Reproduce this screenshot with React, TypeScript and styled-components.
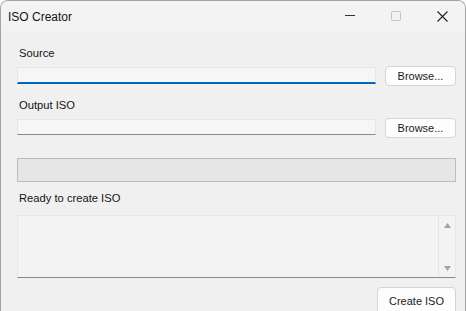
import React from 'react';
import styled, { createGlobalStyle } from 'styled-components';

const GlobalStyle = createGlobalStyle`
  html, body {
    margin: 0;
    padding: 0;
    background: #ffffff;
  }
  * {
    box-sizing: border-box;
  }
`;

const Window = styled.div`
  width: 466px;
  height: 311px;
  overflow: hidden;
  display: flex;
  flex-direction: column;
  background: #f0f0f0;
  border: 1px solid #a3a3a3;
  border-bottom: none;
  border-radius: 8px 8px 0 0;
  font-family: 'Liberation Sans', Arial, sans-serif;
  color: #141414;
`;

const TitleBar = styled.div`
  height: 30px;
  flex: none;
  display: flex;
  align-items: center;
  background: #f3f3f3;
`;

const Title = styled.div`
  flex: 1;
  padding-left: 7px;
  font-size: 12px;
  line-height: 14px;
  margin-top: 1px;
`;

const CaptionButton = styled.div`
  width: 46px;
  height: 30px;
  display: flex;
  align-items: center;
  justify-content: center;
`;

const Body = styled.div`
  flex: 1;
  display: flex;
  flex-direction: column;
  padding: 16px 9px 0 16px;
`;

const Label = styled.div<{ $gap?: number }>`
  font-size: 11.2px;
  line-height: 13px;
  margin-top: ${(p) => p.$gap ?? 0}px;
  margin-left: 2px;
`;

const Row = styled.div`
  display: flex;
  align-items: flex-start;
  gap: 9px;
  margin-top: 6px;
`;

const TextBox = styled.div<{ $focused?: boolean }>`
  flex: 1;
  height: ${(p) => (p.$focused ? 17 : 16)}px;
  margin-top: 1px;
  background: #f6f6f6;
  border: 1px solid #e6e6e6;
  border-bottom: ${(p) => (p.$focused ? '2px solid #0067c0' : '1px solid #8a8a8a')};
`;

const Button = styled.div<{ $width: number; $height?: number }>`
  width: ${(p) => p.$width}px;
  height: ${(p) => p.$height ?? 20}px;
  flex: none;
  display: flex;
  align-items: center;
  justify-content: center;
  background: #fdfdfd;
  border: 1px solid #d4d4d4;
  border-radius: 4px;
  font-size: 11px;
  color: #1b1b1b;
`;

const Progress = styled.div`
  height: 24px;
  margin-top: 20px;
  background: #e6e6e6;
  border: 1px solid #bcbcbc;
`;

const Memo = styled.div`
  height: 63px;
  margin-top: 10px;
  display: flex;
  background: #f3f3f3;
  border: 1px solid #e6e6e6;
  border-bottom: 1px solid #8a8a8a;
`;

const MemoText = styled.div`
  flex: 1;
`;

const ScrollTrack = styled.div`
  width: 17px;
  display: flex;
  flex-direction: column;
  align-items: center;
  justify-content: space-between;
  padding: 7px 0 6px;
  border-left: 1px solid #e6e6e6;
`;

const Footer = styled.div`
  display: flex;
  justify-content: flex-end;
  margin-top: 9px;
`;

const Arrow = ({ up }: { up?: boolean }) => (
  <svg width="7" height="5" viewBox="0 0 7 5">
    <path d={up ? 'M3.5 0 L7 5 L0 5 Z' : 'M0 0 L7 0 L3.5 5 Z'} fill="#a3a3a3" />
  </svg>
);

export default function App() {
  return (
    <>
      <GlobalStyle />
      <Window>
        <TitleBar>
          <Title>ISO Creator</Title>
          <CaptionButton>
            <svg width="10" height="10" viewBox="0 0 10 10">
              <path d="M0 4.5 H10" stroke="#333" strokeWidth="1" />
            </svg>
          </CaptionButton>
          <CaptionButton>
            <svg width="10" height="10" viewBox="0 0 10 10">
              <rect x="0.5" y="0.5" width="9" height="9" rx="1" fill="none" stroke="#c4c4c4" />
            </svg>
          </CaptionButton>
          <CaptionButton>
            <svg width="11" height="11" viewBox="0 0 11 11">
              <path d="M0.5 0.5 L10.5 10.5 M10.5 0.5 L0.5 10.5" stroke="#222" strokeWidth="1.1" />
            </svg>
          </CaptionButton>
        </TitleBar>
        <Body>
          <Label>Source</Label>
          <Row>
            <TextBox $focused />
            <Button $width={71}>Browse...</Button>
          </Row>
          <Label $gap={13}>Output ISO</Label>
          <Row>
            <TextBox />
            <Button $width={71}>Browse...</Button>
          </Row>
          <Progress />
          <Label $gap={10}>Ready to create ISO</Label>
          <Memo>
            <MemoText />
            <ScrollTrack>
              <Arrow up />
              <Arrow />
            </ScrollTrack>
          </Memo>
          <Footer>
            <Button $width={79} $height={28}>Create ISO</Button>
          </Footer>
        </Body>
      </Window>
    </>
  );
}
